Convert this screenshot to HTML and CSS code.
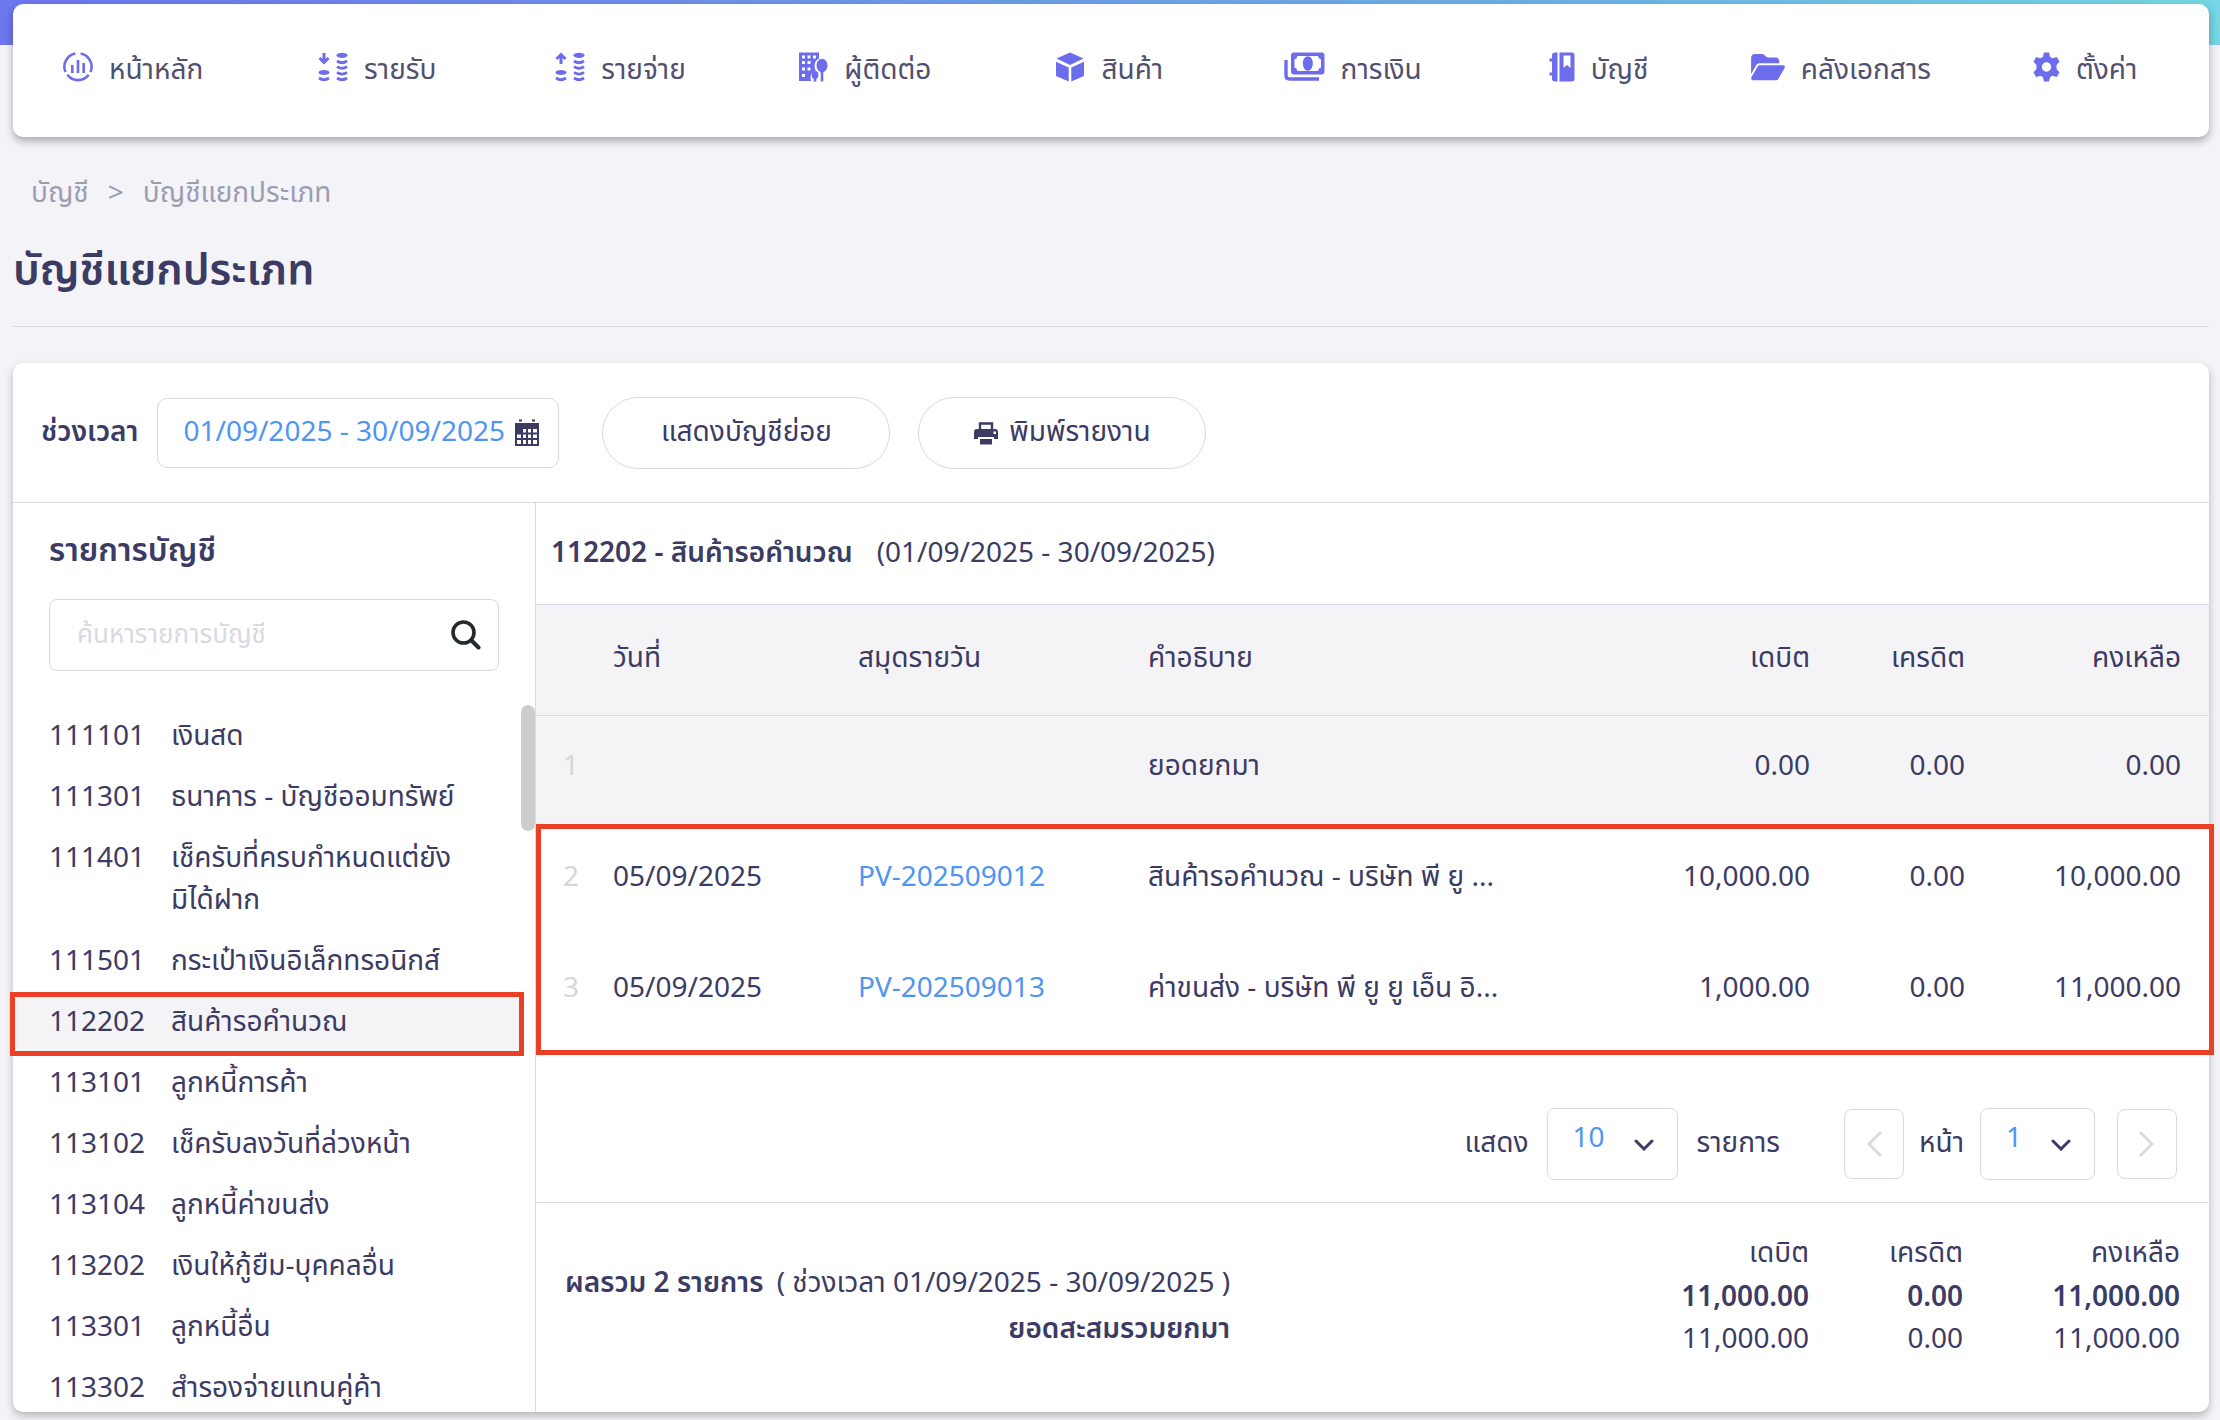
FILE: index.html
```html
<!DOCTYPE html>
<html lang="th">
<head>
<meta charset="utf-8">
<title>บัญชีแยกประเภท</title>
<link rel="stylesheet" href="styles.css">
</head>
<body>
<div class="page">
  <nav class="nav" aria-label="เมนูหลัก">
    <a href="#"><svg width="30" height="30" viewBox="0 0 30 30"><g fill="none" stroke="currentColor" stroke-width="2.6"><path d="M12.400 1.500A13.400 13.400 0 0 0 2.500 20M17.600 1.500A13.400 13.400 0 0 1 27.500 20M4.300 22.800A13.400 13.400 0 0 0 25.700 22.800"/></g><path fill="currentColor" d="M8 13h2.600v8H8zM13.700 8h2.600v13h-2.600zM19.400 11H22v10h-2.600z"/></svg>หน้าหลัก</a>
    <a href="#"><svg width="30" height="30" viewBox="0 0 30 30"><path d="M6 1v9M1.500 6L6 10.500 10.500 6" fill="none" stroke="currentColor" stroke-width="3"/><g fill="currentColor"><ellipse cx="6" cy="20.500" rx="5.500" ry="2.600"/><ellipse cx="24" cy="3.300" rx="5.500" ry="2.600"/></g><g fill="none" stroke="currentColor" stroke-width="2.800"><path d="M1 26q5 3.400 10 0M19 9q5 3.400 10 0M19 14.700q5 3.400 10 0M19 20.400q5 3.400 10 0M19 26q5 3.400 10 0"/></g></svg>รายรับ</a>
    <a href="#"><svg width="30" height="30" viewBox="0 0 30 30"><path d="M6 12V3M1.500 7L6 2.500 10.500 7" fill="none" stroke="currentColor" stroke-width="3"/><g fill="currentColor"><ellipse cx="6" cy="20.500" rx="5.500" ry="2.600"/><ellipse cx="24" cy="3.300" rx="5.500" ry="2.600"/></g><g fill="none" stroke="currentColor" stroke-width="2.800"><path d="M1 26q5 3.400 10 0M19 9q5 3.400 10 0M19 14.700q5 3.400 10 0M19 20.400q5 3.400 10 0M19 26q5 3.400 10 0"/></g></svg>รายจ่าย</a>
    <a href="#"><svg width="30" height="30" viewBox="0 0 30 30"><path fill="currentColor" fill-rule="evenodd" d="M1 0.500H21V6.500Q16.500 8.500 16.500 14 16.500 17 18 18.500 12.500 20 12.500 25L13 29H1ZM4 3.500v3h3v-3zM9.500 3.500v3h3v-3zM15 3.500v3h3v-3zM4 9v3h3V9zM9.500 9v3h3V9zM4 15.500v3h3v-3zM9.500 15.500v3h3v-3zM4 22v3h3v-3z"/><g fill="currentColor"><ellipse cx="24" cy="13.500" rx="5.500" ry="6.800"/><path d="M22.700 19h2.600v10.500h-2.600zM15.700 26h2.600v3.500h-2.600z"/><ellipse cx="17" cy="23" rx="3.400" ry="4"/></g></svg>ผู้ติดต่อ</a>
    <a href="#"><svg width="30" height="30" viewBox="0 0 30 30"><path fill="currentColor" d="M15 0.500L28.500 6.500 15 13 1.500 6.500ZM1 9.800L13.700 15.500V29.500L1 24ZM29 9.800L16.300 15.500V29.500L29 24Z"/></svg>สินค้า</a>
    <a href="#"><svg width="41" height="30" viewBox="0 0 41 30"><path fill="currentColor" fill-rule="evenodd" d="M10 0.500H38Q40.500 0.500 40.500 3.500V19Q40.500 22.500 37.500 22.500H10Q7 22.500 7 19V3.500Q7 0.500 10 0.500ZM13.500 4Q13.200 7 10.500 7.500V15.500Q13.200 16 13.500 19H34Q34.300 16 37 15.500V7.500Q34.300 7 34 4Z"/><ellipse cx="23.800" cy="11.500" rx="5" ry="7.300" fill="currentColor"/><path d="M2 8v15.500q0 3.500 3.500 3.500H35" fill="none" stroke="currentColor" stroke-width="3.400"/></svg>การเงิน</a>
    <a href="#"><svg width="26" height="30" viewBox="0 0 26 30"><path fill="currentColor" fill-rule="evenodd" d="M10.500 0.500H23Q25.500 0.500 25.500 3.500V26.500Q25.500 29.500 23 29.500H10.500ZM14.500 3.500V16L18 13 21.500 16V3.500Z"/><path fill="currentColor" d="M8.500 0.500v29H6q-3 0-3-3v-3H0.500v-3H3v-11H0.500v-3H3v-3q0-3 3-3z"/></svg>บัญชี</a>
    <a href="#"><svg width="34" height="30" viewBox="0 0 576 512"><path fill="currentColor" d="M88.700 223.800L0 375.800V96C0 60.700 28.700 32 64 32H181.500c17 0 33.300 6.700 45.300 18.700l26.500 26.500c12 12 28.300 18.700 45.300 18.700H416c35.300 0 64 28.700 64 64v32H144c-22.800 0-43.800 12.100-55.300 31.800zm27.600 16.100C122.100 230 132.600 224 144 224H544c11.500 0 22 6.100 27.700 16.100s5.700 22.200-.1 32.100l-112 192C453.900 474 443.400 480 432 480H32c-11.500 0-22-6.100-27.700-16.100s-5.700-22.200 .1-32.100l112-192z"/></svg>คลังเอกสาร</a>
    <a href="#"><svg width="27" height="30" viewBox="0 0 27 30"><path fill="currentColor" fill-rule="evenodd" d="M11 0.500H16L17.200 5 19.500 6.300 23.800 5 26.500 9.800 23.500 13V17L26.500 20.200 23.800 25 19.500 23.700 17.200 25 16 29.500H11L9.800 25 7.500 23.700 3.200 25 0.500 20.200 3.500 17V13L0.500 9.800 3.200 5 7.500 6.300 9.800 5ZM13.500 10.300A4.700 4.700 0 1 0 13.500 19.700 4.700 4.700 0 1 0 13.500 10.300Z"/></svg>ตั้งค่า</a>
  </nav>

  <nav class="crumbs" aria-label="เส้นทาง"><a href="#">บัญชี</a><span>&gt;</span><a href="#">บัญชีแยกประเภท</a></nav>
  <h1>บัญชีแยกประเภท</h1>

  <main class="card">
    <form class="toolbar">
      <label for="period">ช่วงเวลา</label>
      <div class="date">
        <input id="period" type="text" value="01/09/2025 - 30/09/2025">
        <svg width="24" height="28" viewBox="0 0 24 28"><path fill="currentColor" fill-rule="evenodd" d="M0 4H24V27H0ZM8 10v3.500h3V10zM13 10v3.500h3V10zM18 10v3.500h4V10zM2 15.500V19h4v-3.500zM8 15.500V19h3v-3.500zM13 15.500V19h3v-3.500zM18 15.500V19h4v-3.500zM2 21v4h4v-4zM8 21v4h3v-4zM13 21v4h3v-4zM18 21v4h4v-4z"/><path fill="currentColor" d="M4 0.500h3v2H4zM17 0.500h3v2h-3z"/></svg>
      </div>
      <button type="button" class="pill">แสดงบัญชีย่อย</button>
      <button type="button" class="pill"><svg width="24" height="24" viewBox="0 0 24 24"><path fill="none" stroke="currentColor" stroke-width="2.400" d="M6 9V2.500H18V9"/><path fill="currentColor" fill-rule="evenodd" d="M3 8H21Q24 8 24 11V18H20V16H4V18H0V11Q0 8 3 8ZM19.500 10.500v2.500H22v-2.500z"/><path fill="currentColor" d="M6 18H18V23.500H6z"/></svg>พิมพ์รายงาน</button>
    </form>

    <div class="split">
      <aside class="side">
        <h2>รายการบัญชี</h2>
        <div class="search">
          <input type="search" aria-label="ค้นหารายการบัญชี" placeholder="ค้นหารายการบัญชี">
          <svg width="30" height="30" viewBox="0 0 30 30" fill="none" stroke="currentColor" stroke-linecap="round"><circle cx="12.500" cy="12.500" r="10.500" stroke-width="3.600"/><path d="M20.500 20.500L27.500 27.500" stroke-width="4"/></svg>
        </div>
        <div class="accounts">
          <ul>
            <li><a href="#"><span>111101</span><span>เงินสด</span></a></li>
            <li><a href="#"><span>111301</span><span>ธนาคาร - บัญชีออมทรัพย์</span></a></li>
            <li><a href="#"><span>111401</span><span>เช็ครับที่ครบกำหนดแต่ยัง<br>มิได้ฝาก</span></a></li>
            <li><a href="#"><span>111501</span><span>กระเป๋าเงินอิเล็กทรอนิกส์</span></a></li>
            <li class="current"><a href="#"><span>112202</span><span>สินค้ารอคำนวณ</span></a></li>
            <li><a href="#"><span>113101</span><span>ลูกหนี้การค้า</span></a></li>
            <li><a href="#"><span>113102</span><span>เช็ครับลงวันที่ล่วงหน้า</span></a></li>
            <li><a href="#"><span>113104</span><span>ลูกหนี้ค่าขนส่ง</span></a></li>
            <li><a href="#"><span>113202</span><span>เงินให้กู้ยืม-บุคคลอื่น</span></a></li>
            <li><a href="#"><span>113301</span><span>ลูกหนี้อื่น</span></a></li>
            <li><a href="#"><span>113302</span><span>สำรองจ่ายแทนคู่ค้า</span></a></li>
          </ul>
          <div class="thumb"></div>
        </div>
      </aside>

      <section class="ledger">
        <header><h3>112202 - สินค้ารอคำนวณ</h3><span>(01/09/2025 - 30/09/2025)</span></header>
        <table class="entries">
          <colgroup><col class="c-no"><col class="c-date"><col class="c-book"><col class="c-desc"><col class="c-debit"><col class="c-credit"><col class="c-balance"></colgroup>
          <thead><tr><th></th><th>วันที่</th><th>สมุดรายวัน</th><th>คำอธิบาย</th><th class="num">เดบิต</th><th class="num">เครดิต</th><th class="num">คงเหลือ</th></tr></thead>
          <tbody class="opening"><tr><td>1</td><td></td><td></td><td>ยอดยกมา</td><td class="num">0.00</td><td class="num">0.00</td><td class="num">0.00</td></tr></tbody>
          <tbody class="marked">
            <tr><td>2</td><td>05/09/2025</td><td><a href="#">PV-202509012</a></td><td>สินค้ารอคำนวณ - บริษัท พี ยู ...</td><td class="num">10,000.00</td><td class="num">0.00</td><td class="num">10,000.00</td></tr>
            <tr><td>3</td><td>05/09/2025</td><td><a href="#">PV-202509013</a></td><td>ค่าขนส่ง - บริษัท พี ยู ยู เอ็น อิ...</td><td class="num">1,000.00</td><td class="num">0.00</td><td class="num">11,000.00</td></tr>
          </tbody>
        </table>

        <div class="pager">
          <label for="size">แสดง</label>
          <div class="select size"><select id="size"><option>10</option></select><svg width="20" height="12" viewBox="0 0 20 12"><path d="M2 2L10 10 18 2"/></svg></div>
          <span class="unit">รายการ</span>
          <button type="button" class="step" aria-label="หน้าก่อน"><svg width="16" height="26" viewBox="0 0 16 26"><path d="M14 2L3 13 14 24"/></svg></button>
          <label for="pageno">หน้า</label>
          <div class="select pageno"><select id="pageno"><option>1</option></select><svg width="20" height="12" viewBox="0 0 20 12"><path d="M2 2L10 10 18 2"/></svg></div>
          <button type="button" class="step next" aria-label="หน้าถัดไป"><svg width="16" height="26" viewBox="0 0 16 26"><path d="M2 2L13 13 2 24"/></svg></button>
        </div>

        <footer class="totals">
          <div class="captions">
            <p><b>ผลรวม 2 รายการ</b> ( ช่วงเวลา 01/09/2025 - 30/09/2025 )</p>
            <p><b>ยอดสะสมรวมยกมา</b></p>
          </div>
          <table>
            <colgroup><col class="t-debit"><col class="t-credit"><col class="t-balance"></colgroup>
            <thead><tr><th>เดบิต</th><th>เครดิต</th><th>คงเหลือ</th></tr></thead>
            <tbody><tr class="sum"><td>11,000.00</td><td>0.00</td><td>11,000.00</td></tr>
            <tr><td>11,000.00</td><td>0.00</td><td>11,000.00</td></tr></tbody>
          </table>
        </footer>
      </section>
    </div>
  </main>
</div>
</body>
</html>
```
FILE: styles.css
```css
* { box-sizing: border-box; }

body {
  margin: 0;
  background: #f3f3f8 linear-gradient(90deg, #6d77ee, #6db1e6 70%, #74d7e4) 0 0 / 100% 45px no-repeat;
  color: #3b3b64;
  font: 400 28px/42px "Noto Sans Thai", "Noto Sans", sans-serif;
}

a { color: inherit; text-decoration: none; }
input, select, button { font: inherit; color: inherit; background: none; border: 0; padding: 0; margin: 0; outline: 0; }
h1, h2, h3, p, ul { margin: 0; padding: 0; }
svg { flex: none; display: block; }
table { border-collapse: collapse; table-layout: fixed; }
th { font-weight: inherit; text-align: left; }

.page { padding: 4px 11px 8px 13px; }

.nav {
  display: grid;
  grid-template-columns: 255fr 237fr 243fr 257fr 228fr 265fr 202fr 282fr 112fr;
  align-items: start;
  height: 133px;
  padding: 46px 64px 0 50px;
  background: #fff;
  border-radius: 10px;
  box-shadow: 0 4px 8px rgba(0, 0, 0, .3);
  color: #51516f;
}
.nav a { display: flex; gap: 16px; white-space: nowrap; }
.nav svg { margin-top: 2px; color: #6c6cec; }

.crumbs { display: flex; gap: 19px; padding: 36px 18px 0; color: #9d9db2; }

h1 {
  margin-top: 26px;
  padding-bottom: 25px;
  border-bottom: 1px solid #d9d9e3;
  font-size: 43px;
  line-height: 60px;
  font-weight: 600;
}

.card {
  margin-top: 36px;
  background: #fff;
  border-radius: 10px;
  box-shadow: 0 4px 8px rgba(0, 0, 0, .25);
}

.toolbar { display: flex; align-items: center; height: 140px; padding: 0 28px; border-bottom: 1px solid #d9d9e3; }
.toolbar label { font-weight: 600; margin-right: 19px; }
.date { display: flex; align-items: center; width: 402px; height: 70px; padding: 0 19px 0 25px; border: 1px solid #d9d9e3; border-radius: 10px; }
.date input { flex: 1; min-width: 0; color: #4f95f2; }
.pill {
  display: flex; align-items: center; justify-content: center; gap: 11px;
  width: 288px; height: 72px; margin-left: 43px;
  border: 1px solid #d9d9e3; border-radius: 36px;
}
.pill + .pill { margin-left: 28px; }

.split { display: grid; grid-template-columns: 523px minmax(0, 1fr); }
.side { border-right: 1px solid #d9d9e3; }
.side h2 { padding: 27px 36px 27px; font-size: 32px; line-height: 42px; font-weight: 600; }
.search { display: flex; align-items: center; height: 72px; margin: 0 36px; padding: 0 17px 0 27px; border: 1px solid #d9d9e3; border-radius: 8px; }
.search input { flex: 1; min-width: 0; font-size: 26px; }
.search input::placeholder { color: #d9d9e3; opacity: 1; }
.search svg { color: #24292e; }

.accounts { position: relative; margin-top: 34px; }
.accounts ul { max-height: 707px; margin-left: -3px; padding-top: 1px; overflow: hidden; list-style: none; }
.accounts li { position: relative; margin-right: 11px; }
.accounts a { display: grid; grid-template-columns: 122px 1fr; padding: 10px 0 9px 39px; }
.current { background: #f4f4f7; }
.current::after { content: ""; position: absolute; inset: 0 0 -3px; border: 5px solid #ea4025; }
.thumb { position: absolute; top: 0; right: 0; width: 14px; height: 126px; border-radius: 7px; background: #cdcdcd; }

.ledger header { display: flex; align-items: center; gap: 24px; height: 101px; padding: 0 15px; }
.ledger h3 { font-size: 28px; font-weight: 600; }

.entries { width: 100%; }
.entries tr { height: 111px; }
.entries td { padding: 0 0 8px; white-space: nowrap; }
.entries th { padding: 0 0 2px; white-space: nowrap; }
.entries td:first-child { padding-left: 27px; color: #d6d6d6; }
.entries .num { text-align: right; }
.entries .num:last-child { padding-right: 28px; }
.entries thead { background: #f4f4f7; border-top: 1px solid #d9d9e3; border-bottom: 1px solid #d9d9e3; }
.entries .opening { background: #f4f4f7; }
.entries a { color: #4f95f2; }
.c-no { width: 77px; }
.c-date { width: 245px; }
.c-book { width: 290px; }
.c-debit { width: 292px; }
.c-credit { width: 155px; }
.c-balance { width: 244px; }
.marked { position: relative; }
.marked::after { content: ""; position: absolute; inset: -3px -5px -6px 0; border: 5px solid #ea4025; }

.pager { display: flex; align-items: center; justify-content: flex-end; height: 153px; padding: 37px 32px 0 0; }
.select { position: relative; height: 72px; border: 1px solid #d9d9e3; border-radius: 8px; }
.select select { width: 100%; height: 100%; padding: 0 0 10px 25px; color: #4f95f2; appearance: none; }
.select svg { position: absolute; right: 23px; top: 30px; pointer-events: none; fill: none; stroke: currentColor; stroke-width: 3; stroke-linecap: round; }
.size { width: 131px; margin: 0 19px 0 18px; }
.unit { margin-right: 64px; }
.pageno { width: 115px; margin-left: 16px; }
.step { display: grid; place-items: center; width: 60px; height: 70px; margin-right: 15px; border: 1px solid #d9d9e3; border-radius: 8px; }
.step svg { fill: none; stroke: #d9d9e3; stroke-width: 3; stroke-linecap: round; stroke-linejoin: round; }
.next { margin: 0 0 0 22px; }

.totals { display: flex; align-items: flex-start; justify-content: space-between; min-height: 209px; padding: 28px 29px 0 29px; border-top: 1px solid #d9d9e3; }
.captions { padding-top: 30px; line-height: 46px; text-align: right; }
.captions b { font-weight: 600; }
.captions p:first-child b { margin-right: 6px; }
.totals td, .totals th { padding: 0; text-align: right; }
.totals th { line-height: 46px; }
.totals .sum { font-weight: 600; }
.t-debit { width: 160px; }
.t-credit { width: 154px; }
.t-balance { width: 217px; }
```
